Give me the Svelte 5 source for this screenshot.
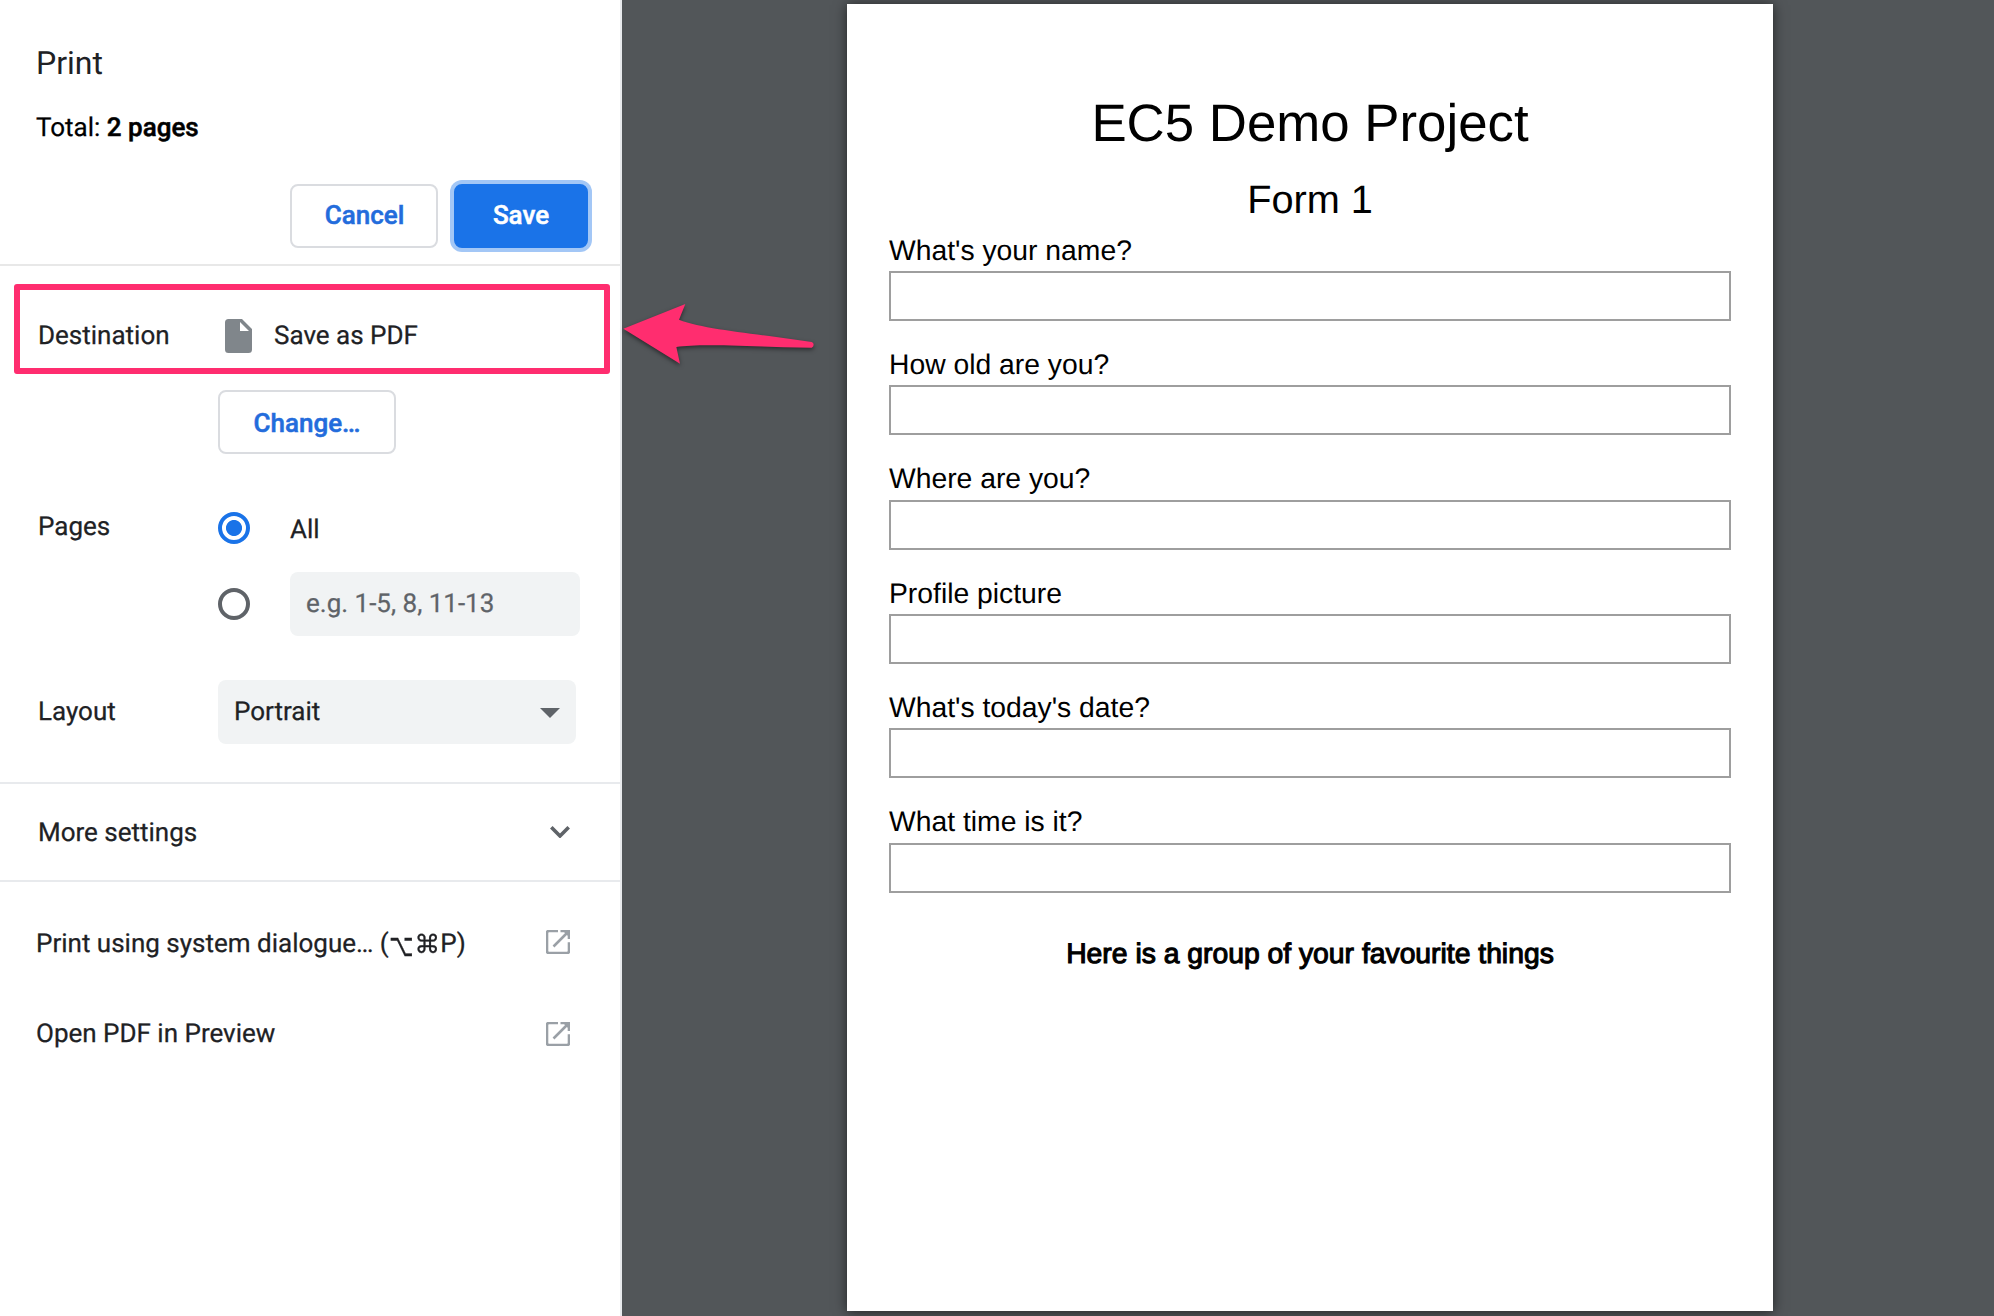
<script>
  const questions = [
    "What's your name?",
    'How old are you?',
    'Where are you?',
    'Profile picture',
    "What's today's date?",
    'What time is it?'
  ];
</script>

{#snippet openIcon()}
  <svg class="open-icon" viewBox="0 0 24 24" width="24" height="24">
    <path d="M12 1H3Q1 1 1 3V21Q1 23 3 23H21Q23 23 23 21V12.2M14.5 1H23V9M22.5 1.5L7.5 16.5" />
    <path class="solid" d="M16 0H24V8Z" />
  </svg>
{/snippet}

<div class="app">
  <aside class="sidebar">
    <header class="header">
      <h1>Print</h1>
      <p class="total">Total: <b>2 pages</b></p>
      <div class="actions">
        <button class="btn cancel">Cancel</button>
        <button class="btn save">Save</button>
      </div>
    </header>

    <section class="settings">
      <div class="row destination">
        <span class="label">Destination</span>
        <svg class="file-icon" viewBox="0 0 27 34" width="27" height="34">
          <path fill-rule="evenodd" d="M3.5 0H17L27 10V30.500Q27 34 23.500 34H3.500Q0 34 0 30.500V3.500Q0 0 3.500 0ZM15 3V12H24Z" />
        </svg>
        <span>Save as PDF</span>
        <div class="highlight"></div>
      </div>
      <button class="btn change">Change…</button>

      <div class="row pages">
        <span class="label">Pages</span>
        <span class="radio on"></span>
        <span class="all">All</span>
      </div>
      <div class="row range">
        <span class="label"></span>
        <span class="radio"></span>
        <div class="range-input">e.g. 1-5, 8, 11-13</div>
      </div>

      <div class="row layout">
        <span class="label">Layout</span>
        <div class="select">
          <span>Portrait</span>
          <svg viewBox="0 0 20 10" width="20" height="10"><path d="M0 0H20L10 10Z" /></svg>
        </div>
      </div>
    </section>

    <section class="more">
      <span>More settings</span>
      <svg viewBox="0 0 20 12" width="20" height="12"><path d="M1.300 1.300L10 10L18.700 1.300" /></svg>
    </section>

    <section class="links">
      <div class="link">
        <span>Print using system dialogue… (<span class="key option">⌥</span><span class="key command">⌘</span>P)</span>
        {@render openIcon()}
      </div>
      <div class="link second">
        <span>Open PDF in Preview</span>
        {@render openIcon()}
      </div>
    </section>
  </aside>

  <main class="preview">
    <article class="page">
      <h2>EC5 Demo Project</h2>
      <h3>Form 1</h3>
      <div class="questions">
        {#each questions as question}
          <div class="question">
            <span>{question}</span>
            <div class="field"></div>
          </div>
        {/each}
      </div>
      <p class="group">Here is a group of your favourite things</p>
    </article>
  </main>

  <svg class="arrow" viewBox="0 0 600 200" width="200" height="66.667">
    <path d="M10 77L196 3L177 50C260 82 430 93 575 117A9 9 0 0 1 575 134C430 133 245 119 169 132L180 182Z" />
  </svg>
</div>

<style>
  :global(body) {
    margin: 0;
  }
  .app {
    position: relative;
    display: flex;
    width: 1994px;
    height: 1316px;
    overflow: hidden;
    background: #525659;
    text-rendering: geometricPrecision;
  }
  .sidebar {
    flex: none;
    box-sizing: border-box;
    width: 622px;
    background: #fff;
    border-right: 2px solid #e8eaed;
    font: 26px/30px Roboto, sans-serif;
    color: #202124;
    -webkit-text-stroke: 0.25px;
  }
  h1, h2, h3, p {
    margin: 0;
    font-weight: 400;
  }
  .header {
    padding: 44px 32px 16px 36px;
    border-bottom: 2px solid #e8e8e8;
  }
  h1 {
    font-size: 32px;
    line-height: 38px;
    -webkit-text-stroke: 0;
  }
  .total {
    margin-top: 31px;
    color: #000;
  }
  .total b {
    font-weight: 500;
    -webkit-text-stroke: 0.5px;
  }
  .actions {
    display: flex;
    justify-content: flex-end;
    gap: 16px;
    margin-top: 41px;
  }
  .btn {
    box-sizing: border-box;
    height: 64px;
    padding: 0 0 2px;
    border: 2px solid #dadce0;
    border-radius: 8px;
    background: #fff;
    color: #236cdc;
    font: 500 26px/30px Roboto, sans-serif;
    -webkit-text-stroke: 0.5px;
  }
  .cancel {
    width: 148px;
    padding-left: 1px;
  }
  .save {
    width: 134px;
    border-color: #1a73e8;
    background: #1a73e8;
    color: #fff;
    box-shadow: 0 0 0 4px #a3c7f6;
  }
  .settings {
    padding: 35px 0 38px 38px;
    border-bottom: 2px solid #e8eaed;
  }
  .row {
    display: flex;
    align-items: center;
  }
  .label {
    flex: none;
    width: 180px;
  }
  .destination {
    position: relative;
    height: 68px;
  }
  .destination > span {
    padding-top: 2px;
  }
  .file-icon {
    margin: 1px 22px 0 7px;
    fill: #80868b;
  }
  .highlight {
    position: absolute;
    left: -24px;
    top: -17px;
    box-sizing: border-box;
    width: 596px;
    height: 90px;
    border: 6px solid #ff2d6f;
    border-radius: 3px;
  }
  .change {
    display: block;
    width: 178px;
    margin: 21px 0 0 180px;
    padding: 1px 0 0;
  }
  .pages {
    height: 32px;
    margin-top: 58px;
  }
  .pages .label {
    padding-bottom: 2px;
  }
  .radio {
    box-sizing: border-box;
    width: 32px;
    height: 32px;
    margin-right: 40px;
    border: 4px solid #5f6368;
    border-radius: 50%;
  }
  .radio.on {
    border-color: #1a73e8;
    background: radial-gradient(circle, #1a73e8 7.600px, #fff 8.400px);
  }
  .all {
    padding-top: 3px;
  }
  .range {
    margin-top: 28px;
  }
  .range-input,
  .select {
    box-sizing: border-box;
    height: 64px;
    border-radius: 8px;
    background: #f1f3f4;
  }
  .range-input {
    width: 290px;
    padding: 17px 16px 0;
    color: #5f6368;
  }
  .layout {
    margin-top: 44px;
  }
  .select {
    display: flex;
    align-items: center;
    justify-content: space-between;
    width: 358px;
    padding: 0 16px;
  }
  .select svg {
    margin-top: 2px;
    fill: #5f6368;
  }
  .more {
    display: flex;
    align-items: center;
    justify-content: space-between;
    height: 96px;
    padding: 0 50px 0 38px;
    border-bottom: 2px solid #e8eaed;
  }
  .more span {
    padding-top: 2px;
  }
  .more svg {
    fill: none;
    stroke: #5f6368;
    stroke-width: 3.600;
  }
  .links {
    padding: 14px 50px 0 36px;
  }
  .link {
    display: flex;
    align-items: center;
    justify-content: space-between;
    height: 92px;
  }
  .link > span {
    padding-top: 3px;
    white-space: nowrap;
  }
  .second > span {
    padding: 0;
  }
  .key {
    display: inline-block;
    height: 26px;
    font-family: 'DejaVu Sans', sans-serif;
    line-height: 26px;
    text-align: center;
  }
  .option {
    width: 25px;
    font-size: 21px;
    transform: scaleY(1.5);
  }
  .command {
    width: 26.500px;
    font-size: 22px;
    transform: scale(1.16);
  }
  .open-icon {
    fill: none;
    stroke: #9aa0a6;
    stroke-width: 2.600;
  }
  .open-icon .solid {
    fill: #9aa0a6;
    stroke: none;
  }
  .preview {
    flex: 1;
    padding: 4px 0 0 225px;
  }
  .page {
    box-sizing: border-box;
    width: 926px;
    height: 1307px;
    padding: 90px 42px 0;
    background: #fff;
    box-shadow: 0 1px 12px rgba(0, 0, 0, 0.6);
    color: #000;
    font: 28.300px/32px 'Liberation Sans', Arial, sans-serif;
  }
  h2 {
    font-size: 52.800px;
    line-height: 60px;
    text-align: center;
  }
  h3 {
    margin-top: 23px;
    font-size: 39.700px;
    line-height: 46px;
    text-align: center;
  }
  .questions {
    display: grid;
    grid-auto-rows: 114.350px;
    margin-top: 10.700px;
  }
  .field {
    box-sizing: border-box;
    height: 50px;
    margin-top: 5.300px;
    border: 2px solid #9e9e9e;
  }
  .group {
    margin-top: 17.500px;
    text-align: center;
    -webkit-text-stroke: 1.100px #000;
  }
  .arrow {
    position: absolute;
    left: 620px;
    top: 303px;
    fill: #ff2d6f;
    filter: drop-shadow(0 2px 2px rgba(0, 0, 0, 0.5));
  }
</style>
